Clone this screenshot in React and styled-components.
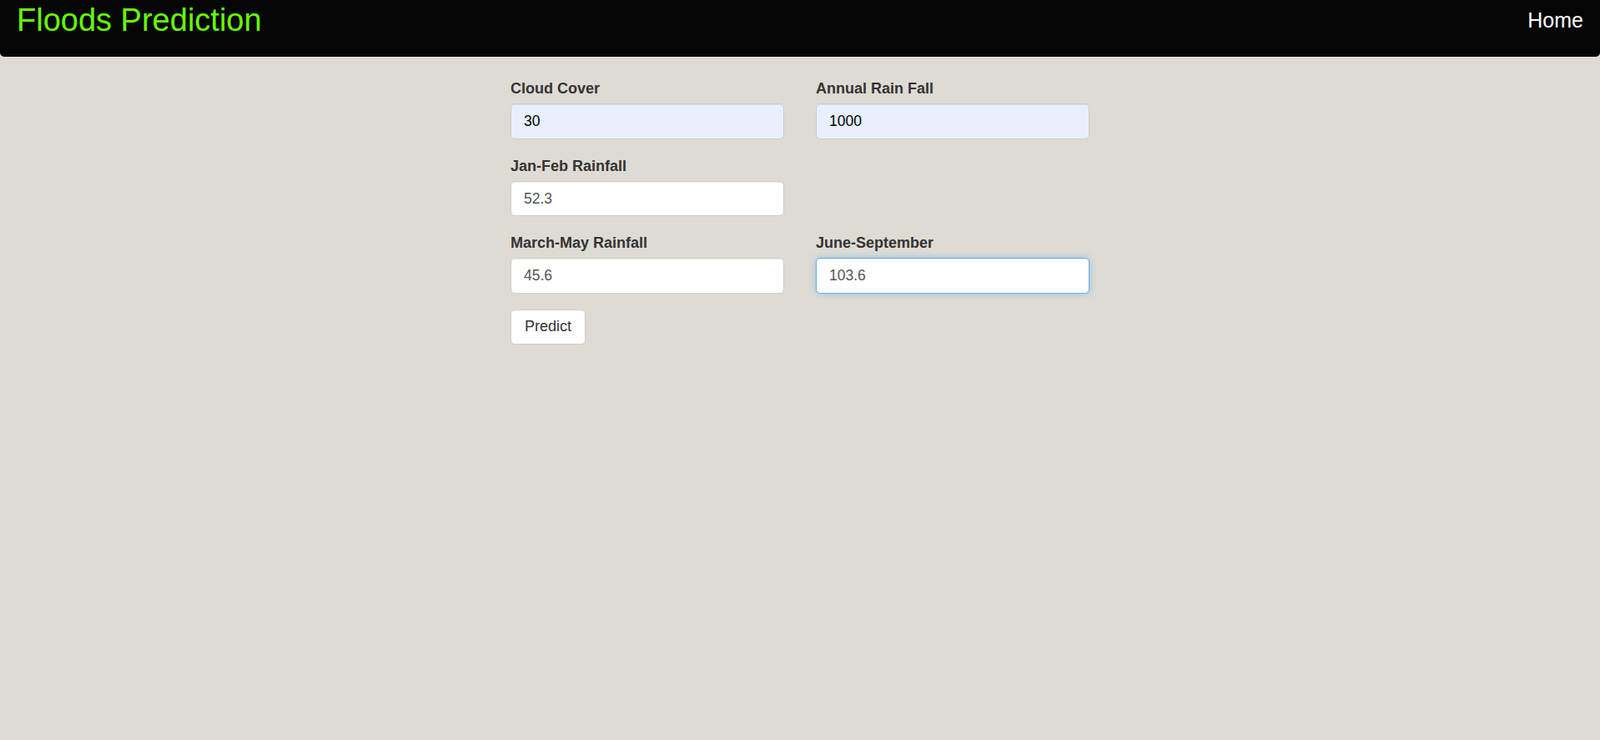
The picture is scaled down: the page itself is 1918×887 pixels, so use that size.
import React from "react";
import styled, { createGlobalStyle } from "styled-components";

const Global = createGlobalStyle`
  html, body { margin: 0; padding: 0; }
  body {
    background: #dedbd4;
    font-family: "Liberation Sans", Arial, Helvetica, sans-serif;
    font-size: 17.5px;
    line-height: 25px;
    color: #333;
    min-height: 887px;
  }
  * { box-sizing: border-box; }
`;

const NavBar = styled.header`
  height: 68px;
  background: #050505;
  border-radius: 0 0 5px 5px;
  display: flex;
  align-items: flex-start;
  justify-content: space-between;
  margin-bottom: 25px;
`;

const Brand = styled.a`
  color: #66ff00;
  font-size: 38px;
  line-height: 43px;
  padding: 3px 0 0 20px;
  text-decoration: none;
  font-family: "Liberation Sans", Arial, sans-serif;
`;

const NavLink = styled.a`
  color: #ffffff;
  font-size: 25px;
  line-height: 30px;
  padding: 9px 20px 0 0;
  text-decoration: none;
`;

const Form = styled.form`
  width: 694px;
  margin: 0 auto;
`;

const Row = styled.div`
  display: grid;
  grid-template-columns: 328px 328px;
  column-gap: 38px;
`;

const Group = styled.div`
  margin-bottom: 18.75px;
`;

const Label = styled.label`
  display: block;
  font-weight: bold;
  font-size: 18px;
  line-height: 25px;
  padding-top: 1px;
  margin-bottom: 5.25px;
  color: #333;
`;

const Input = styled.input`
  display: block;
  width: 100%;
  height: 42.5px;
  padding: 7.5px 15px;
  font-family: "Liberation Sans", Arial, sans-serif;
  font-size: 17.5px;
  line-height: 25px;
  color: ${(p) => (p.$autofill ? "#000" : "#555")};
  background: ${(p) => (p.$autofill ? "#e8f0fe" : "#fff")};
  border: 1px solid ${(p) => (p.$focus ? "#66afe9" : "#ccc")};
  border-radius: 5px;
  box-shadow: ${(p) =>
    p.$focus
      ? "inset 0 1px 1px rgba(0,0,0,.075), 0 0 8px rgba(102,175,233,.6)"
      : "inset 0 1px 1px rgba(0,0,0,.075)"};
  outline: none;
`;

const Button = styled.button`
  display: inline-block;
  height: 42.5px;
  padding: 7.5px 16px;
  font-family: "Liberation Sans", Arial, sans-serif;
  font-size: 18px;
  line-height: 25px;
  color: #333;
  background: #fff;
  border: 1px solid #ccc;
  border-radius: 5px;
  cursor: pointer;
`;

const Field = ({ label, value, autofill, focus }) => (
  <Group>
    <Label>{label}</Label>
    <Input defaultValue={value} $autofill={autofill} $focus={focus} />
  </Group>
);

export default function App() {
  return (
    <>
      <Global />
      <NavBar>
        <Brand href="#">Floods Prediction</Brand>
        <NavLink href="#">Home</NavLink>
      </NavBar>
      <Form onSubmit={(e) => e.preventDefault()}>
        <Row>
          <Field label="Cloud Cover" value="30" autofill />
          <Field label="Annual Rain Fall" value="1000" autofill />
        </Row>
        <Row>
          <Field label="Jan-Feb Rainfall" value="52.3" />
        </Row>
        <Row>
          <Field label="March-May Rainfall" value="45.6" />
          <Field label="June-September" value="103.6" focus />
        </Row>
        <Button type="submit">Predict</Button>
      </Form>
    </>
  );
}
